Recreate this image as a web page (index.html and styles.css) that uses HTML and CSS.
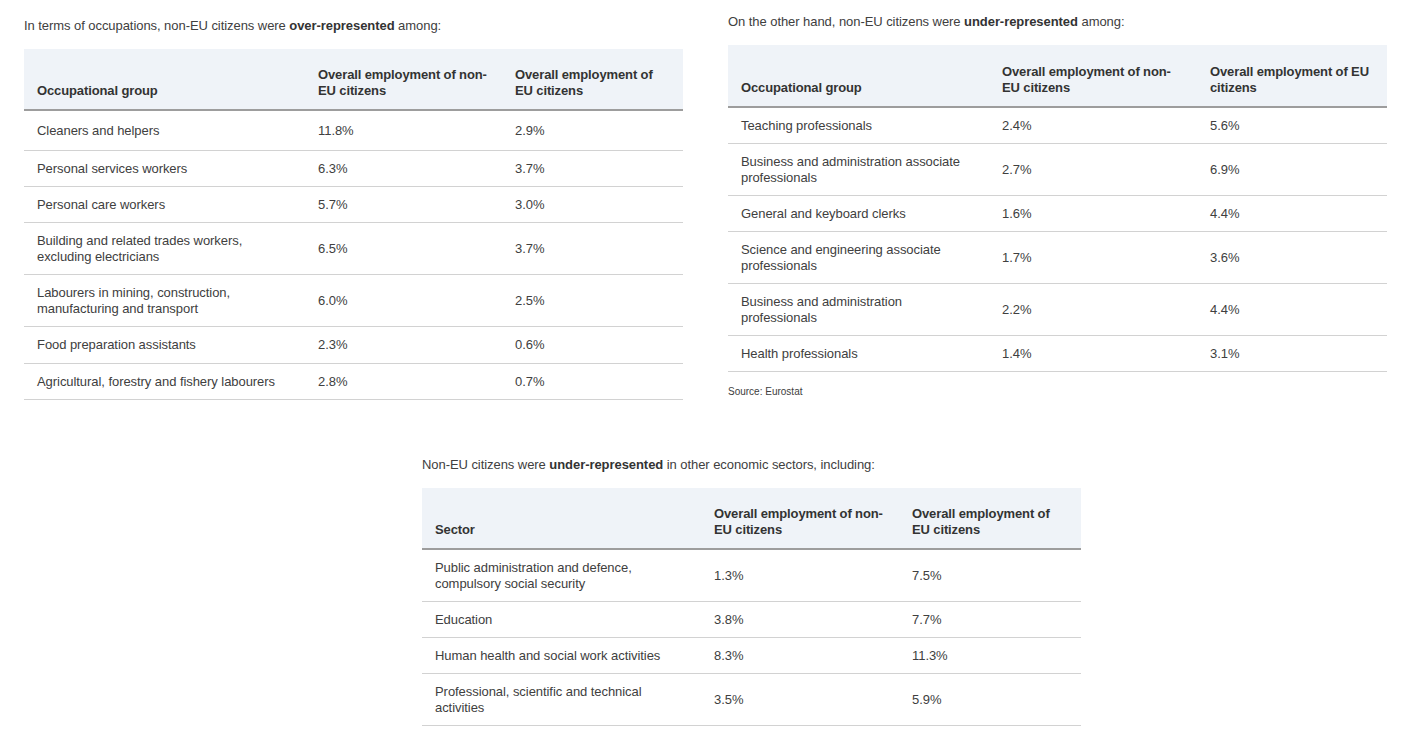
FILE: index.html
```html
<!DOCTYPE html>
<html lang="en">
<head>
<meta charset="utf-8">
<title>Non-EU citizens employment</title>
<link rel="stylesheet" href="styles.css">
</head>
<body>
<div class="top-row">
  <section class="block block-left">
    <p class="intro">In terms of occupations, non-EU citizens were <strong>over-represented</strong> among:</p>
    <table class="data t-left">
      <colgroup><col class="c1"><col class="c2"><col class="c3"></colgroup>
      <thead>
        <tr><th>Occupational group</th><th>Overall employment of non-EU citizens</th><th>Overall employment of EU citizens</th></tr>
      </thead>
      <tbody>
        <tr class="first"><td>Cleaners and helpers</td><td>11.8%</td><td>2.9%</td></tr>
        <tr><td>Personal services workers</td><td>6.3%</td><td>3.7%</td></tr>
        <tr><td>Personal care workers</td><td>5.7%</td><td>3.0%</td></tr>
        <tr><td>Building and related trades workers, excluding electricians</td><td>6.5%</td><td>3.7%</td></tr>
        <tr><td>Labourers in mining, construction, manufacturing and transport</td><td>6.0%</td><td>2.5%</td></tr>
        <tr class="tall"><td>Food preparation assistants</td><td>2.3%</td><td>0.6%</td></tr>
        <tr><td>Agricultural, forestry and fishery labourers</td><td>2.8%</td><td>0.7%</td></tr>
      </tbody>
    </table>
  </section>
  <section class="block block-right">
    <p class="intro">On the other hand, non-EU citizens were <strong>under-represented</strong> among:</p>
    <table class="data t-right">
      <colgroup><col class="c1"><col class="c2"><col class="c3"></colgroup>
      <thead>
        <tr><th>Occupational group</th><th>Overall employment of non-EU citizens</th><th>Overall employment of EU citizens</th></tr>
      </thead>
      <tbody>
        <tr><td>Teaching professionals</td><td>2.4%</td><td>5.6%</td></tr>
        <tr><td>Business and administration associate professionals</td><td>2.7%</td><td>6.9%</td></tr>
        <tr><td>General and keyboard clerks</td><td>1.6%</td><td>4.4%</td></tr>
        <tr><td>Science and engineering associate professionals</td><td>1.7%</td><td>3.6%</td></tr>
        <tr><td>Business and administration professionals</td><td>2.2%</td><td>4.4%</td></tr>
        <tr><td>Health professionals</td><td>1.4%</td><td>3.1%</td></tr>
      </tbody>
    </table>
    <p class="source">Source: Eurostat</p>
  </section>
</div>
<section class="block block-bottom">
  <p class="intro">Non-EU citizens were <strong>under-represented</strong> in other economic sectors, including:</p>
  <table class="data t-bottom">
    <colgroup><col class="c1"><col class="c2"><col class="c3"></colgroup>
    <thead>
      <tr><th>Sector</th><th>Overall employment of non-EU citizens</th><th>Overall employment of EU citizens</th></tr>
    </thead>
    <tbody>
      <tr><td>Public administration and defence, compulsory social security</td><td>1.3%</td><td>7.5%</td></tr>
      <tr><td>Education</td><td>3.8%</td><td>7.7%</td></tr>
      <tr><td>Human health and social work activities</td><td>8.3%</td><td>11.3%</td></tr>
      <tr><td>Professional, scientific and technical activities</td><td>3.5%</td><td>5.9%</td></tr>
    </tbody>
  </table>
</section>
</body>
</html>
```

FILE: styles.css
```css
html, body {
  margin: 0;
  padding: 0;
  background: #ffffff;
}

body {
  font-family: "Liberation Sans", Arial, sans-serif;
  font-size: 13px;
  line-height: 16px;
  color: #404040;
  letter-spacing: -0.06px;
}

.top-row {
  display: flex;
  align-items: flex-start;
  gap: 45px;
  padding-left: 24px;
}

.block {
  width: 659px;
}

.block-left {
  padding-top: 18px;
}

.block-right {
  padding-top: 14px;
}

.block-bottom {
  margin-left: 422px;
  margin-top: 57px;
}

.intro {
  margin: 0 0 15px 0;
}

.intro strong {
  font-weight: bold;
  color: #333333;
}

.data {
  width: 659px;
  border-collapse: collapse;
  table-layout: fixed;
}

.data th {
  background: #eff3f8;
  font-weight: bold;
  text-align: left;
  vertical-align: bottom;
  color: #333333;
  letter-spacing: -0.12px;
  padding: 18px 13px 10px 13px;
  border-bottom: 2px solid #9d9d9d;
}

.t-right th {
  padding-top: 19px;
}

.data td {
  padding: 10px 13px 9px 13px;
  vertical-align: middle;
  border-bottom: 1px solid #d2d2d2;
}

.t-left tr.first td {
  padding-top: 12px;
  padding-bottom: 11px;
}

.t-left tr.tall td {
  padding-bottom: 10px;
}

.t-left .c1 { width: 281px; }
.t-left .c2 { width: 197px; }
.t-left .c3 { width: 181px; }

.t-right .c1 { width: 261px; }
.t-right .c2 { width: 208px; }
.t-right .c3 { width: 190px; }

.t-bottom .c1 { width: 279px; }
.t-bottom .c2 { width: 198px; }
.t-bottom .c3 { width: 182px; }

.source {
  margin: 14px 0 0 0;
  font-size: 10px;
  line-height: 12px;
  letter-spacing: 0;
  color: #404040;
}
```
